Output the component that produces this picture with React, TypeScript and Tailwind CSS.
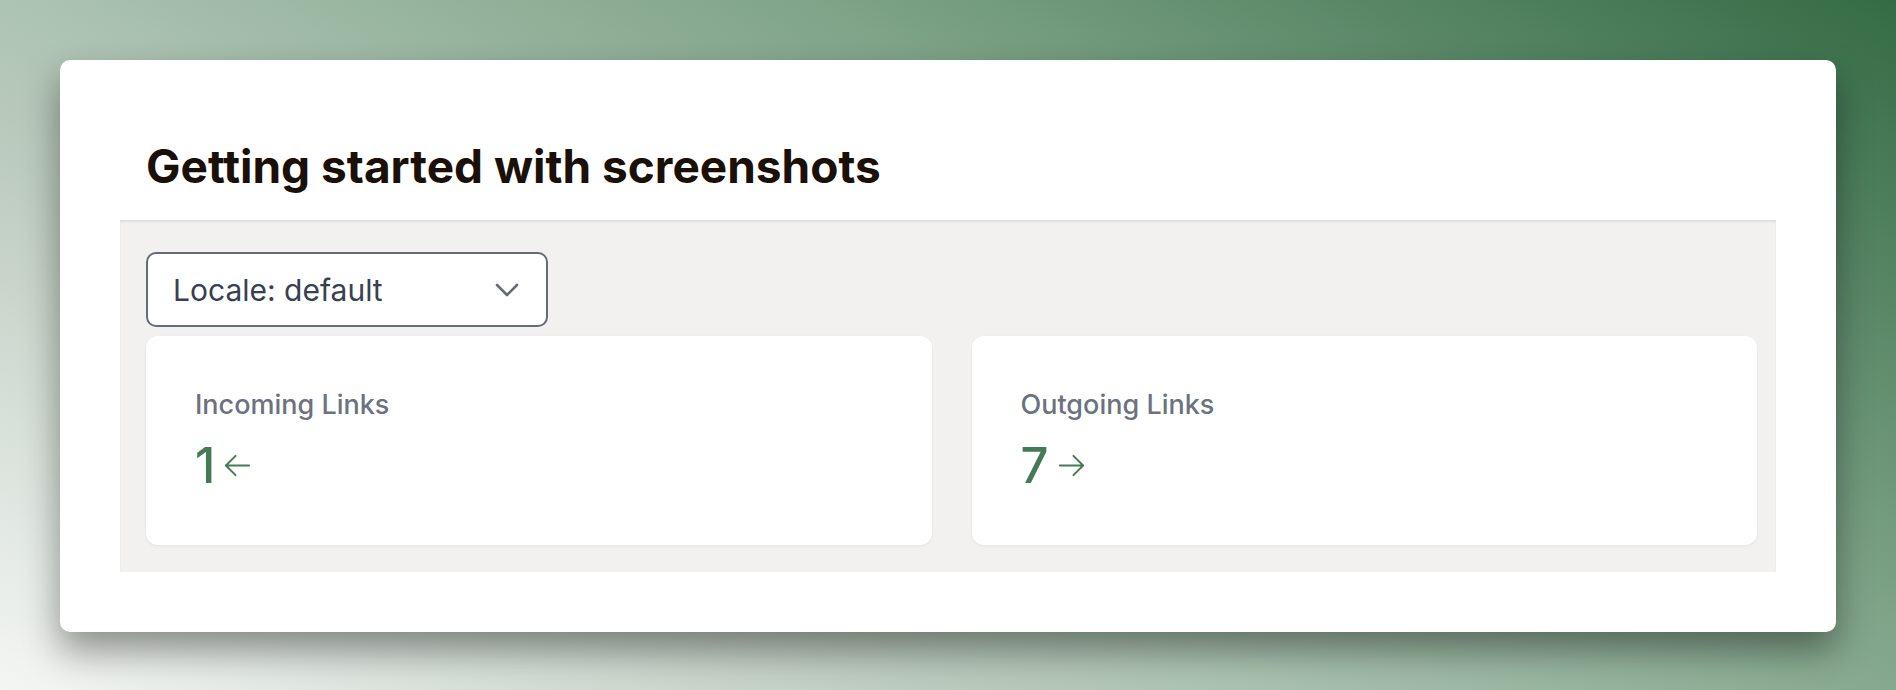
import { type ReactNode } from "react";

function ArrowIcon({ dir }: { dir: "left" | "right" }) {
  const d =
    dir === "left"
      ? "M10.5 19.5 3 12m0 0 7.5-7.5M3 12h18"
      : "M13.5 4.5 21 12m0 0-7.5 7.5M21 12H3";
  return (
    <svg viewBox="0 0 24 24" fill="none" stroke="currentColor" strokeWidth={1.5} className="h-[31px] w-[31px]">
      <path strokeLinecap="round" strokeLinejoin="round" d={d} />
    </svg>
  );
}

function StatCard({ label, value, icon }: { label: string; value: string; icon: ReactNode }) {
  return (
    <div className="rounded-xl bg-white pb-[55px] pl-[49px] pt-[51px] shadow-[0_1px_3px_rgba(0,0,0,0.06)]">
      <p className="text-[27px] font-medium leading-[36px] text-[#6b7280]">{label}</p>
      <div className="mt-[18px] flex items-center text-[#467a55]">
        <span className="text-[49px] font-medium leading-[49px]">{value}</span>
        <span className="ml-[7px]">{icon}</span>
      </div>
    </div>
  );
}

export default function App() {
  return (
    <div className="h-[690px] w-full bg-[linear-gradient(30deg,#f4f6f4_0%,#bccbbf_30%,#abc2b1_40%,#7fa488_65%,#346b45_100%)] p-[60px] font-['Inter',sans-serif]">
      <div className="rounded-[10px] bg-white px-[60px] pb-[60px] shadow-[0_18px_36px_rgba(0,0,0,0.4)]">
        <div className="px-[26px] pb-[31px] pt-[84px]">
          <h1 className="text-[46px] font-bold leading-[45px] text-[#1a1008]">
            Getting started with screenshots
          </h1>
        </div>
        <div className="bg-[#f2f1ef] pb-[27px] pl-[26px] pr-[19px] pt-[32px] shadow-[inset_0_2px_2px_rgba(0,0,0,0.07)]">
          <button
            type="button"
            className="flex h-[75px] w-[402px] items-center justify-between rounded-[10px] border-2 border-[#646b79] bg-white pl-[25px] pr-[27px] text-[#374151]"
          >
            <span className="text-[30px] leading-none">Locale: default</span>
            <svg viewBox="0 0 24 14" fill="none" stroke="#646b79" strokeWidth={2.6} className="h-[14px] w-[24px]">
              <path strokeLinecap="round" strokeLinejoin="round" d="M2 2l10 10L22 2" />
            </svg>
          </button>
          <div className="mt-[9px] grid grid-cols-2 gap-[40px]">
            <StatCard label="Incoming Links" value="1" icon={<ArrowIcon dir="left" />} />
            <StatCard label="Outgoing Links" value="7" icon={<ArrowIcon dir="right" />} />
          </div>
        </div>
      </div>
    </div>
  );
}
